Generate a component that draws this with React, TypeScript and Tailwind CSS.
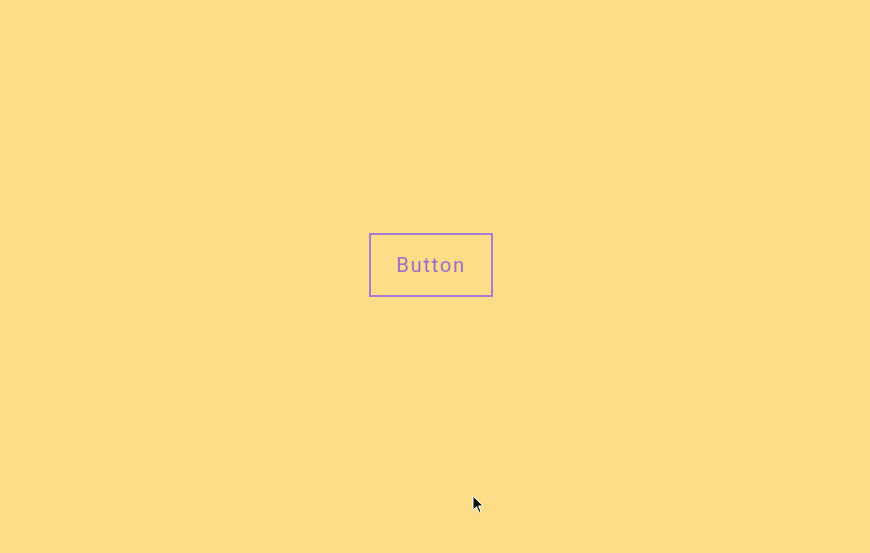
export default function App() {
  return (
    <div className="relative h-[553px] w-[870px] overflow-hidden bg-[#fedd89]" style={{ fontFamily: 'Roboto, "Noto Sans", sans-serif' }}>
      <div className="flex justify-center pr-[8px] pt-[233px]">
        <button className="h-[64px] w-[124px] border-2 border-[#a77dd3] text-[20px] tracking-[0.09em] text-[#9c70c6]">
          Button
        </button>
      </div>
      <svg className="absolute left-[472px] top-[495px]" width="14" height="20" viewBox="0 0 14 20">
        <path d="M1 1 L1 15 L4.5 11.8 L7 17.5 L9 16.6 L6.6 11 L11 11 Z" fill="#111" stroke="#fff" strokeWidth="1" />
      </svg>
    </div>
  );
}
